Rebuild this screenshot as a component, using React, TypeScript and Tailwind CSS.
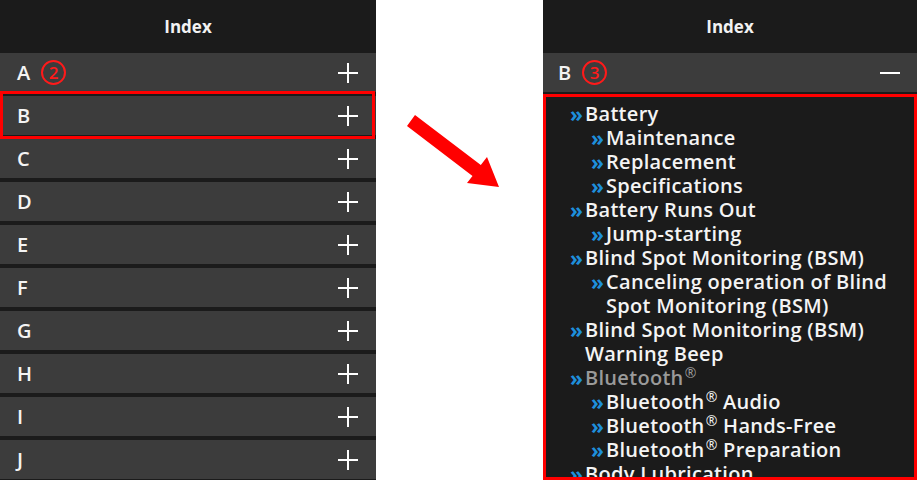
import React from "react";

const letters = ["A", "B", "C", "D", "E", "F", "G", "H", "I", "J"];

type Item = { text: React.ReactNode; level: 1 | 2; muted?: boolean };

const Reg = () => <span className="relative -top-[7px] ml-[1px] text-[14px] font-normal leading-none">®</span>;

const items: Item[] = [
  { text: "Battery", level: 1 },
  { text: "Maintenance", level: 2 },
  { text: "Replacement", level: 2 },
  { text: "Specifications", level: 2 },
  { text: "Battery Runs Out", level: 1 },
  { text: "Jump-starting", level: 2 },
  { text: "Blind Spot Monitoring (BSM)", level: 1 },
  { text: "Canceling operation of Blind Spot Monitoring (BSM)", level: 2 },
  { text: "Blind Spot Monitoring (BSM) Warning Beep", level: 1 },
  { text: <>Bluetooth<Reg /></>, level: 1, muted: true },
  { text: <>Bluetooth<Reg /> Audio</>, level: 2 },
  { text: <>Bluetooth<Reg /> Hands-Free</>, level: 2 },
  { text: <>Bluetooth<Reg /> Preparation</>, level: 2 },
  { text: "Body Lubrication", level: 1 },
];

function Plus() {
  return (
    <svg width="22" height="22" viewBox="0 0 22 22" className="text-white">
      <path d="M11 1v20M1 11h20" stroke="currentColor" strokeWidth="2" />
    </svg>
  );
}

function Minus() {
  return (
    <svg width="22" height="22" viewBox="0 0 22 22" className="text-white">
      <path d="M1 11h20" stroke="currentColor" strokeWidth="2" />
    </svg>
  );
}

function Circled({ n }: { n: string }) {
  return (
    <span className="ml-[11px] flex h-[25px] w-[25px] items-center justify-center rounded-full border-2 border-[#ff1a1a] text-[17px] font-semibold leading-none text-[#ff1a1a]">
      {n}
    </span>
  );
}

function Header() {
  return (
    <div className="flex h-[53px] items-center justify-center bg-[#1b1b1b] text-[17px] font-bold text-[#f2f2f2]">
      Index
    </div>
  );
}

export default function App() {
  return (
    <div className="flex h-[480px] w-[917px] overflow-hidden bg-white font-['Open_Sans',sans-serif]">
      {/* Left: collapsed index */}
      <div className="flex w-[376px] flex-col bg-[#1b1b1b]">
        <Header />
        <div className="flex flex-col gap-[4px]">
          {letters.map((l) => (
            <div key={l} className="relative flex h-[39px] items-center justify-between bg-[#3c3c3c] pl-[17px] pr-[17px]">
              <div className="flex items-center">
                <span className="text-[20px] font-semibold text-[#f4f4f4]">{l}</span>
                {l === "A" && <Circled n="2" />}
              </div>
              <Plus />
              {l === "B" && (
                <div className="absolute -top-[5px] -bottom-[4px] left-0 right-[1px] border-[3px] border-[#ff0000]" />
              )}
            </div>
          ))}
        </div>
      </div>

      {/* Arrow */}
      <div className="relative flex-1">
        <svg className="absolute left-0 top-0" width="167" height="480" viewBox="0 0 167 480">
          <polygon points="39,115 104.8,165 111,157 123,187 91,183 96.5,175.9 31,126" fill="#ff0000" />
        </svg>
      </div>

      {/* Right: expanded B */}
      <div className="flex w-[374px] flex-col bg-[#1b1b1b]">
        <Header />
        <div className="flex h-[39px] items-center justify-between bg-[#3c3c3c] pl-[15px] pr-[16px]">
          <div className="flex items-center">
            <span className="text-[20px] font-semibold text-[#f4f4f4]">B</span>
            <Circled n="3" />
          </div>
          <Minus />
        </div>
        <div className="mt-[2px] flex-1 overflow-hidden border-[3px] border-[#ff0000] pl-[24px] pr-[8px] pt-[5px]">
          {items.map((it, i) => (
            <div
              key={i}
              className={`flex items-start text-[20px] font-semibold leading-[24px] tracking-[0.3px] ${it.level === 2 ? "pl-[21px]" : ""}`}
            >
              <span className="flex h-[24px] w-[15px] shrink-0 items-center text-[21px] font-bold leading-none tracking-normal text-[#1e8fdc]">»</span>
              <span className={it.muted ? "text-[#9a9a9a]" : "text-[#f4f4f4]"}>{it.text}</span>
            </div>
          ))}
        </div>
      </div>
    </div>
  );
}
